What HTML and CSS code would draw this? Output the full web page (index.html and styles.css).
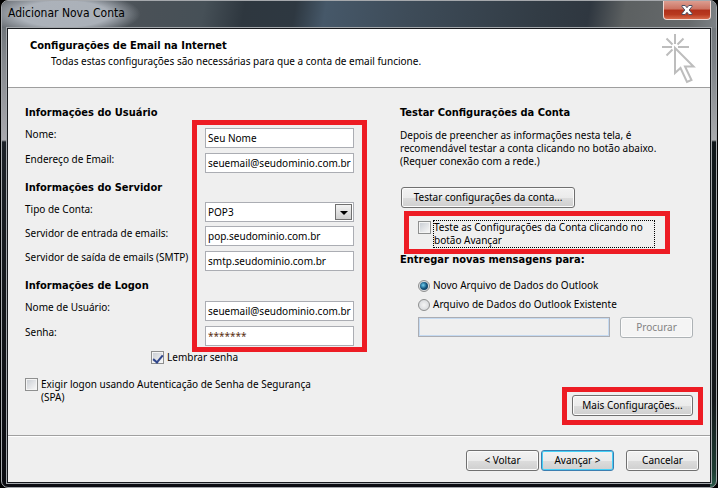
FILE: index.html
```
<!DOCTYPE html>
<html lang="pt-BR">
<head>
  <meta charset="UTF-8" />
  <meta name="viewport" content="width=device-width, initial-scale=1" />
  <title>Adicionar Nova Conta</title>
  <link rel="stylesheet" href="styles.css">
</head>
<body>

  <div class="window">
    <!-- Title bar -->
    <div class="titlebar">
      <span class="title">Adicionar Nova Conta</span>
      <button type="button" class="close" aria-label="Fechar">
        <svg width="12" height="10" viewBox="0 0 12 10">
          <path d="M1 .5h3.2L6 2.7 7.8.5H11V1.500L8.200 5 11 8.500v1H7.800L6 7.300 4.200 9.500H1v-1L3.800 5 1 1.500z" fill="#fff" stroke="#4a4f63" stroke-width="1"/>
        </svg>
      </button>
    </div>

    <form class="client" action="#">
      <!-- Wizard header -->
      <header>
        <div>
          <h1>Configurações de Email na Internet</h1>
          <p>Todas estas configurações são necessárias para que a conta de email funcione.</p>
        </div>
        <svg class="cursor" width="34" height="50" viewBox="0 0 34 50" fill="none" stroke="#bdbdbd" stroke-width="2">
          <path d="M13 0v10M0 13h10M16 13h11M4.500 4.500l6 6M21.500 4.500l-6 6M4.500 21.500l6-6"/>
          <path d="M13 14v25l5.500-5 6.500 14 4.500-2-6.500-13.500h8.500z"/>
        </svg>
      </header>

      <main>
        <!-- Account data -->
        <section class="account">
          <div class="fields">
            <h2>Informações do Usuário</h2>
            <label for="name">Nome:</label>
            <input type="text" id="name" value="Seu Nome" />
            <label for="email">Endereço de Email:</label>
            <input type="text" id="email" value="seuemail@seudominio.com.br" />

            <h2>Informações do Servidor</h2>
            <label for="type">Tipo de Conta:</label>
            <div class="select">
              <select id="type">
                <option>POP3</option>
                <option>IMAP</option>
              </select>
              <span class="arrow"></span>
            </div>
            <label for="incoming">Servidor de entrada de emails:</label>
            <input type="text" id="incoming" value="pop.seudominio.com.br" />
            <label for="outgoing">Servidor de saída de emails (SMTP)</label>
            <input type="text" id="outgoing" value="smtp.seudominio.com.br" />

            <h2>Informações de Logon</h2>
            <label for="user">Nome de Usuário:</label>
            <input type="text" id="user" value="seuemail@seudominio.com.br" />
            <label for="password">Senha:</label>
            <input type="text" id="password" class="password" value="*******" autocomplete="off" />

            <div class="marker"></div>
          </div>

          <div class="option remember">
            <input type="checkbox" id="remember" checked />
            <label for="remember">Lembrar senha</label>
          </div>
          <div class="option spa">
            <input type="checkbox" id="spa" />
            <label for="spa">Exigir logon usando Autenticação de Senha de Segurança (SPA)</label>
          </div>
        </section>

        <!-- Test and delivery -->
        <section class="test">
          <h2>Testar Configurações da Conta</h2>
          <p>Depois de preencher as informações nesta tela, é recomendável testar a conta clicando no botão abaixo. (Requer conexão com a rede.)</p>
          <button type="button" class="btn run-test">Testar configurações da conta...</button>

          <div class="option highlight">
            <input type="checkbox" id="autotest" />
            <label for="autotest" class="focused">Teste as Configurações da Conta clicando no botão Avançar</label>
          </div>

          <h2>Entregar novas mensagens para:</h2>
          <div class="option radio">
            <input type="radio" name="delivery" id="newfile" checked />
            <label for="newfile">Novo Arquivo de Dados do Outlook</label>
          </div>
          <div class="option radio">
            <input type="radio" name="delivery" id="oldfile" />
            <label for="oldfile">Arquivo de Dados do Outlook Existente</label>
          </div>
          <div class="browse">
            <input type="text" aria-label="Arquivo de dados" disabled />
            <button type="button" class="btn" disabled>Procurar</button>
          </div>

          <div class="highlight more">
            <button type="button" class="btn">Mais Configurações...</button>
          </div>
        </section>
      </main>

      <!-- Wizard buttons -->
      <footer>
        <button type="button" class="btn">&lt; Voltar</button>
        <button type="submit" class="btn default">Avançar &gt;</button>
        <button type="button" class="btn cancel">Cancelar</button>
      </footer>
    </form>
  </div>

</body>
</html>
```
FILE: styles.css
```
* {
  box-sizing: border-box;
}

body {
  margin: 0;
  background: #000;
  color: #000;
  font-family: "Noto Sans", sans-serif;
  font-size: 10px;
  line-height: 13px;
}

h1, h2, p {
  margin: 0;
}
h1, h2, .title {
  font-family: "DejaVu Sans Condensed", "DejaVu Sans", sans-serif;
  font-stretch: condensed;
  font-size: 11px;
  line-height: 13px;
}

input, select, button {
  margin: 0;
  font: inherit;
  color: inherit;
}

/* Window frame */
.window {
  display: flex;
  flex-direction: column;
  min-height: 100vh;
  margin: 0 1px;
  padding: 0 5px 4px;
  border: 1px solid #a5a8ac;
  border-radius: 7px;
  background:
    linear-gradient(#5f666b, #85898e 60px, #a9a9ae 139px, #1d2228 141px, #14171b 300px, #0a0b10) left / 6px 100% no-repeat,
    linear-gradient(#6b7074, #7d8287 60px, #a9abae 139px, #10171b 141px, #14171b 400px, #1f3d33 470px, #2b5a49) right / 6px 100% no-repeat,
    #0b0c12;
}

.titlebar {
  display: flex;
  justify-content: space-between;
  align-items: flex-start;
  height: 27px;
  margin: 0 -5px;
  padding: 0 5px 0 6px;
  border-radius: 6px 6px 0 0;
  background:
    radial-gradient(ellipse 90px 26px at 62px 13px, rgba(180, 186, 194, 0.9) 50%, rgba(180, 186, 194, 0) 85%),
    linear-gradient(100deg, #6c7177 0, #4a5157 140px, #465057 200px, #2e373f 240px, #2e3841 290px, #465869 320px, #3e4c59 400px, #323c45 530px, #2f3740 580px, #5c6061 615px, #666a6c 680px, #7d8286 100%);
}
.title {
  padding-top: 6px;
  font-size: 12px;
}
.close {
  display: flex;
  align-items: center;
  justify-content: center;
  width: 48px;
  height: 19px;
  padding: 0;
  border: 1px solid #f0d8d2;
  border-top: none;
  border-radius: 0 0 4px 4px;
  background: linear-gradient(#dc9d90, #cc7261 45%, #b0301a 50%, #b8391f 75%, #d6694a);
}

/* Client area */
.client {
  display: flex;
  flex: 1;
  flex-direction: column;
  border: 1px solid #17191d;
  outline: 1px solid #a3a7ab;
  background: #efefef;
}

header {
  display: flex;
  justify-content: space-between;
  height: 59px;
  padding: 5px 14px 0 22px;
  border-bottom: 1px solid #9e9e9e;
  background: #fff;
}
header h1 {
  padding-top: 5px;
}
header p {
  padding: 3px 0 0 21px;
}

main {
  display: grid;
  grid-template-columns: 375fr 303fr;
  flex: 1;
  padding: 12px 7px 10px 17px;
  border-bottom: 1px solid #a0a0a0;
}

/* Account fields */
.fields {
  display: grid;
  grid-template-columns: 180px 149px;
  grid-template-rows: 25px 25px 25px 25px 24px 24px 25px 25px 25px 25px;
  align-items: center;
  position: relative;
}
.fields h2 {
  grid-column: 1 / 3;
}
.fields label {
  grid-column: 1;
  padding-bottom: 6px;
  white-space: nowrap;
}
.fields input, .select {
  grid-column: 2;
  width: 100%;
  height: 20px;
  padding: 0 2px;
  border: 1px solid #abadb3;
  background: #fff;
}
.fields .password {
  color: #5a2f10;
}
.select {
  display: flex;
  align-items: center;
  position: relative;
}
.select select {
  width: 100%;
  border: none;
  background: none;
  appearance: none;
}
.arrow {
  position: absolute;
  top: 1px;
  right: 1px;
  width: 17px;
  height: 16px;
  border: 1px solid #707070;
  background: linear-gradient(#f3f3f3, #cfcfcf);
  pointer-events: none;
}
.arrow::after {
  content: "";
  position: absolute;
  top: 6px;
  left: 4px;
  border: 4px solid transparent;
  border-top-color: #000;
  border-bottom: none;
}

/* Red highlights */
.marker {
  position: absolute;
  top: 20px;
  bottom: -4px;
  left: 167px;
  width: 175px;
  border: 5px solid #ed1c24;
  pointer-events: none;
}
.highlight {
  border: 5px solid #ed1c24;
}

/* Checkboxes and radios */
.option {
  display: flex;
  align-items: flex-start;
  gap: 3px;
}
.option input {
  flex: none;
  display: grid;
  place-items: center;
  width: 13px;
  height: 13px;
  border: 1px solid #8e8f8f;
  background: linear-gradient(135deg, #cbcfd5, #f6f6f6) content-box, #f4f4f4;
  padding: 1px;
  appearance: none;
}
.option input[type="checkbox"]:checked::after {
  content: "";
  width: 4px;
  height: 8px;
  border: solid #31478c;
  border-width: 0 2px 2px 0;
  transform: rotate(40deg);
}
.option input[type="radio"] {
  width: 12px;
  height: 12px;
  border-radius: 50%;
  background: radial-gradient(#f4f4f4, #cfd2d6);
}
.option input[type="radio"]:checked::after {
  content: "";
  width: 8px;
  height: 8px;
  border-radius: 50%;
  background: radial-gradient(circle at 40% 40%, #6fd0f2, #14567f 50%, #0c2d4a);
}
.remember {
  padding: 3px 0 0 126px;
}
.spa {
  max-width: 300px;
  padding-top: 14px;
}

/* Test column */
.test {
  display: flex;
  flex-direction: column;
  align-items: flex-start;
  padding-top: 6px;
}
.test p {
  max-width: 265px;
  padding-top: 10px;
}

.btn {
  min-width: 73px;
  height: 21px;
  padding: 0 6px;
  border: 1px solid #707070;
  border-radius: 3px;
  background: linear-gradient(#f2f2f2, #ebebeb 50%, #dddddd 50%, #cfcfcf);
  box-shadow: inset 0 0 0 1px #fbfbfb;
  white-space: nowrap;
}
.btn:disabled {
  border-color: #adb2b5;
  background: #f4f4f4;
  color: #838383;
}
.run-test {
  width: 174px;
  margin: 19px 0 3px 1px;
}
.test .option.highlight {
  width: 266px;
  height: 43px;
  margin: 0 0 -1px 4px;
  padding: 5px 11px 5px 9px;
}
.focused {
  flex: 1;
  outline: 1px dotted #000;
}
.radio {
  align-items: center;
  padding-left: 18px;
  margin-bottom: 6px;
}
.test h2 + .radio {
  margin-top: 13px;
}
.browse {
  display: flex;
  gap: 10px;
  padding-left: 18px;
}
.browse input {
  width: 192px;
  height: 20px;
  border: 1px solid #abadb3;
  box-shadow: inset 0 0 0 1px #c5daf1;
  background: #efefef;
}
.more {
  align-self: flex-end;
  margin-top: auto;
  padding: 3px 5px 4px;
}
.more .btn {
  display: block;
  width: 121px;
}

footer {
  display: flex;
  justify-content: flex-end;
  gap: 2px;
  padding: 13px 11px 11px;
  border-top: 1px solid #fff;
}
.default {
  border-color: #3c7fb1;
  box-shadow: inset 0 0 0 1px #46d0f7;
}
.cancel {
  margin-left: 10px;
}
```
